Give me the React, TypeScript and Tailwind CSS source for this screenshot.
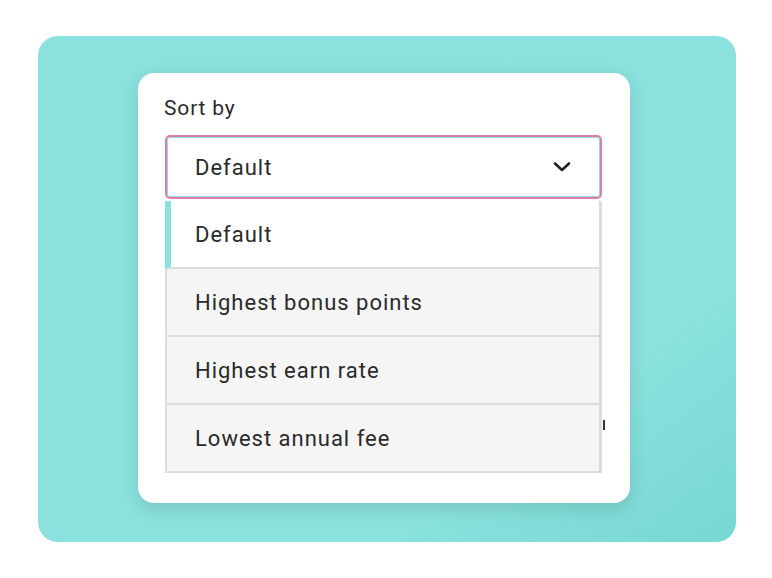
import React from 'react';

const options = ['Default', 'Highest bonus points', 'Highest earn rate', 'Lowest annual fee'];

const App: React.FC = () => {
  return (
    <div className="w-[772px] h-[578px] bg-white pt-[36px] pl-[38px]" style={{ fontFamily: 'Roboto, "Noto Sans", sans-serif' }}>
      <div className="w-[698px] h-[506px] rounded-[20px] pt-[37px] pl-[100px] bg-gradient-to-br from-[#8ae1de] via-[#8ae1de] via-75% to-[#76d7d3]">
        <div className="w-[492px] h-[430px] rounded-[16px] bg-white shadow-[0_6px_18px_rgba(0,0,0,0.12)] pt-[22px] pl-[27px] relative">
          <div className="text-[21px] leading-[26px] text-[#2a2a2a] ml-[-1px] tracking-[0.04em]">Sort by</div>
          <div className="mt-[14px] w-[437px] h-[64px] rounded-[5px] border-2 border-[#e17aad] shadow-[inset_0_0_0_1px_#8ae1de] flex items-center justify-between pl-[28px] pr-[28px]">
            <span className="text-[22px] text-[#2a2a2a] tracking-[0.045em]">Default</span>
            <svg width="20" height="12" viewBox="0 0 20 12" fill="none">
              <path d="M3 2.5 L10 9 L17 2.5" stroke="#222" strokeWidth="2.6" strokeLinecap="round" strokeLinejoin="round" />
            </svg>
          </div>
          <div className="mt-[2px] w-[437px] border-l-2 border-r-[3px] border-b-2 border-[#dcdcdc]">
            {options.map((o, i) => (
              <div
                key={o}
                className={
                  i === 0
                    ? 'h-[68px] bg-white border-l-[6px] border-[#8ae1de] ml-[-2px] pl-[24px] flex items-center text-[22px] text-[#2a2a2a] tracking-[0.045em] border-b-2 border-b-[#dcdcdc]'
                    : i === options.length - 1
                    ? 'h-[66px] bg-[#f5f5f5] pl-[28px] flex items-center text-[22px] text-[#2a2a2a] tracking-[0.045em]'
                    : 'h-[68px] bg-[#f5f5f5] pl-[28px] flex items-center text-[22px] text-[#2a2a2a] tracking-[0.045em] border-b-2 border-[#dcdcdc]'
                }
              >
                {o}
              </div>
            ))}
          </div>
          <div className="absolute left-[465px] top-[347px] w-[2px] h-[10px] bg-[#333]" />
        </div>
      </div>
    </div>
  );
};

export default App;
